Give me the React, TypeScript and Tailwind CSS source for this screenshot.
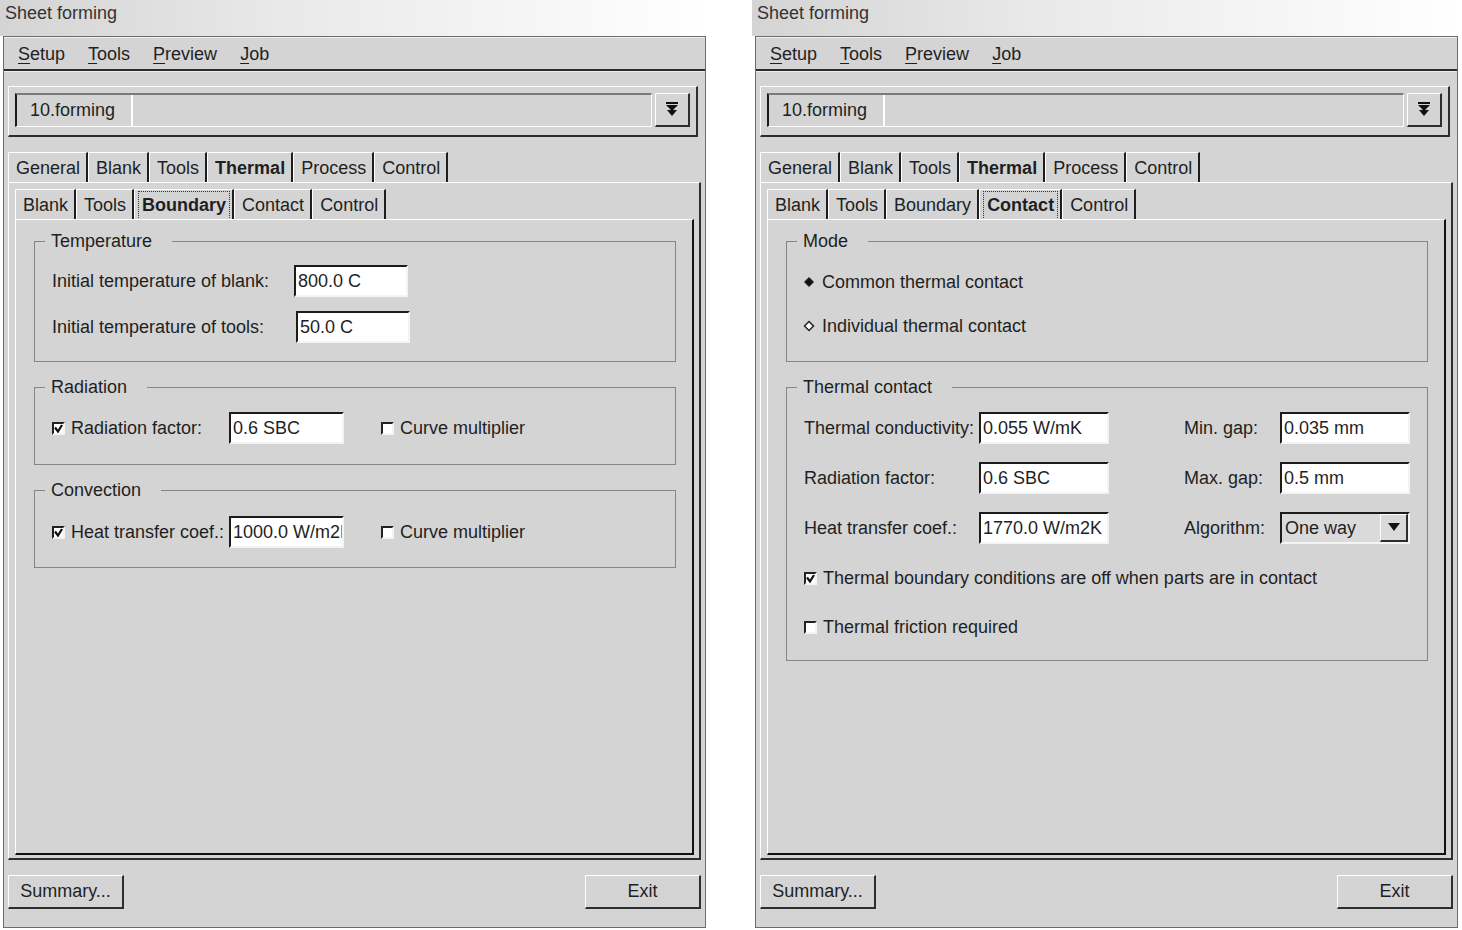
import React from 'react';

const MAIN_TABS = ['General', 'Blank', 'Tools', 'Thermal', 'Process', 'Control'];
const SUB_TABS = ['Blank', 'Tools', 'Boundary', 'Contact', 'Control'];

const raised =
  'border-t border-l border-t-white border-l-white border-b-2 border-r-2 border-b-[#2e2e2e] border-r-[#2e2e2e]';
const sunken =
  'border-2 border-t-[#1c1c1c] border-l-[#1c1c1c] border-b-[#f4f4f4] border-r-[#f4f4f4]';

function MenuBar() {
  const items = ['Setup', 'Tools', 'Preview', 'Job'];
  return (
    <div className="h-[34px] flex items-center gap-[23px] pl-[14px] pt-[2px] border-t border-t-[#f2f2f2] border-b-2 border-b-[#2b2b2b] shadow-[0_1px_0_#ededed]">
      {items.map(m => (
        <span key={m}>
          <span className="underline underline-offset-[3px]">{m[0]}</span>
          {m.slice(1)}
        </span>
      ))}
    </div>
  );
}

function ComboBar() {
  return (
    <div className={`mt-[15px] w-[690px] h-[51px] flex items-start pt-[6px] pl-[6px] pr-[6px] ${raised}`}>
      <div className="flex-1 h-[34px] flex border-t-2 border-l-2 border-t-[#7a7a7a] border-l-[#1a1a1a] border-b border-r border-b-white border-r-white">
        <div className="w-[116px] flex items-center pl-[13px] border-r-2 border-r-white">10.forming</div>
        <div className="flex-1" />
      </div>
      <div className={`ml-[3px] w-[35px] h-[34px] flex items-center justify-center ${raised}`}>
        <svg width="14" height="15" viewBox="0 0 14 15">
          <rect x="1" y="0" width="12" height="2" fill="#111" />
          <polygon points="1,3 13,3 7,9" fill="#111" />
          <polygon points="2,8 12,8 7,14" fill="#111" />
        </svg>
      </div>
    </div>
  );
}

function Tabs({ items, active, focus }: { items: string[]; active: string; focus?: boolean }) {
  return (
    <div className="flex h-[30px]">
      {items.map(t => {
        const on = t === active;
        return (
          <div
            key={t}
            className={`flex items-center pt-[2px] pl-[7px] pr-[6px] border-t border-l border-t-white border-l-white border-r-2 border-r-[#1e1e1e] ${on ? 'font-bold' : ''}`}
          >
            {on && focus ? (
              <span className="outline-1 outline-dotted outline-[#333] outline-offset-[3px]">{t}</span>
            ) : (
              t
            )}
          </div>
        );
      })}
    </div>
  );
}

function Field({ value, w }: { value: string; w: string }) {
  return (
    <div className={`${w} h-[32px] bg-white pl-[2px] flex items-center overflow-hidden whitespace-nowrap ${sunken}`}>
      {value}
    </div>
  );
}

function Check({ on }: { on?: boolean }) {
  return (
    <div className="w-[13px] h-[13px] shrink-0 bg-white border-2 border-t-[#222] border-l-[#222] border-b-[#f4f4f4] border-r-[#f4f4f4] flex items-center justify-center">
      {on && (
        <svg width="9" height="9" viewBox="0 0 9 9">
          <path d="M1 3.5 L4 7.5 L8 1" stroke="#111" strokeWidth="2.2" fill="none" />
        </svg>
      )}
    </div>
  );
}

function Radio({ on }: { on?: boolean }) {
  return (
    <svg width="12" height="12" viewBox="0 0 12 12" className="shrink-0">
      <polygon
        points="6,1.5 10.5,6 6,10.5 1.5,6"
        fill={on ? '#111' : '#fff'}
        stroke="#222"
        strokeWidth={on ? 1 : 1.5}
      />
    </svg>
  );
}

function Group({
  title,
  className,
  children,
}: {
  title: string;
  className: string;
  children: React.ReactNode;
}) {
  return (
    <fieldset className={`border border-[#858585] px-[10px] ${className}`}>
      <legend className="pl-[6px] pr-[20px] leading-[21px]">{title}</legend>
      {children}
    </fieldset>
  );
}

function Button({ children }: { children: React.ReactNode }) {
  return (
    <div className={`w-[116px] h-[34px] flex items-center justify-center ${raised}`}>{children}</div>
  );
}

function Window({ sub, className, children }: { sub: string; className: string; children: React.ReactNode }) {
  return (
    <div className={`${className} flex flex-col`}>
      <div className="h-[36px] pl-[5px] pt-[3px] text-[#333] bg-linear-to-r from-[#d4d4d4] via-[#e9e9e9] via-40% to-white">
        Sheet forming
      </div>
      <div className="ml-[3px] w-[703px] border border-[#6b6b6b] bg-[#d4d4d4] flex flex-col">
        <MenuBar />
        <div className="px-[4px] flex flex-col">
          <ComboBar />
          <div className="mt-[15px]">
            <Tabs items={MAIN_TABS} active="Thermal" />
          </div>
          <div className={`h-[678px] flex flex-col pt-[6px] pl-[6px] pr-[5px] pb-[3px] ${raised}`}>
            <Tabs items={SUB_TABS} active={sub} focus />
            <div className="flex-1 flex flex-col pl-[18px] pr-[16px] border-t border-l border-t-white border-l-white border-b-2 border-r-2 border-b-[#111] border-r-[#111]">
              {children}
            </div>
          </div>
          <div className="mt-[15px] mb-[18px] flex justify-between">
            <Button>Summary...</Button>
            <Button>Exit</Button>
          </div>
        </div>
      </div>
    </div>
  );
}

function BoundaryPage() {
  return (
    <>
      <Group title="Temperature" className="mt-[11px] pt-[13px] pb-[18px]">
        <div className="h-[32px] flex items-center pl-[7px]">
          <span className="w-[242px]">Initial temperature of blank:</span>
          <Field value="800.0 C" w="w-[114px]" />
        </div>
        <div className="mt-[14px] h-[32px] flex items-center pl-[7px]">
          <span className="w-[244px]">Initial temperature of tools:</span>
          <Field value="50.0 C" w="w-[114px]" />
        </div>
      </Group>
      <Group title="Radiation" className="mt-[15px] pt-[14px] pb-[20px]">
        <div className="h-[32px] flex items-center pl-[7px]">
          <Check on />
          <span className="ml-[6px] w-[158px]">Radiation factor:</span>
          <Field value="0.6 SBC" w="w-[115px]" />
          <div className="ml-[37px]">
            <Check />
          </div>
          <span className="ml-[6px]">Curve multiplier</span>
        </div>
      </Group>
      <Group title="Convection" className="mt-[15px] pt-[15px] pb-[19px]">
        <div className="h-[32px] flex items-center pl-[7px]">
          <Check on />
          <span className="ml-[6px] w-[158px]">Heat transfer coef.:</span>
          <Field value="1000.0 W/m2K" w="w-[115px]" />
          <div className="ml-[37px]">
            <Check />
          </div>
          <span className="ml-[6px]">Curve multiplier</span>
        </div>
      </Group>
    </>
  );
}

function ContactPage() {
  const rows: [string, React.ReactNode, string, React.ReactNode][] = [
    ['Thermal conductivity:', <Field value="0.055 W/mK" w="w-[130px]" />, 'Min. gap:', <Field value="0.035 mm" w="w-[130px]" />],
    ['Radiation factor:', <Field value="0.6 SBC" w="w-[130px]" />, 'Max. gap:', <Field value="0.5 mm" w="w-[130px]" />],
    [
      'Heat transfer coef.:',
      <Field value="1770.0 W/m2K" w="w-[130px]" />,
      'Algorithm:',
      <div className={`w-[130px] h-[32px] flex bg-[#dadada] ${sunken}`}>
        <span className="flex-1 flex items-center pl-[3px]">One way</span>
        <div className={`w-[28px] flex items-center justify-center ${raised}`}>
          <svg width="12" height="9" viewBox="0 0 12 9">
            <polygon points="0,0 12,0 6,8" fill="#111" />
          </svg>
        </div>
      </div>,
    ],
  ];
  return (
    <>
      <Group title="Mode" className="mt-[11px] pt-[14px] pb-[19px]">
        <div className="h-[32px] flex items-center pl-[6px] gap-[7px]">
          <Radio on />
          <span>Common thermal contact</span>
        </div>
        <div className="mt-[12px] h-[32px] flex items-center pl-[6px] gap-[7px]">
          <Radio />
          <span>Individual thermal contact</span>
        </div>
      </Group>
      <Group title="Thermal contact" className="mt-[15px] pt-[14px] pb-[17px]">
        <div className="flex flex-col gap-[18px]">
          {rows.map(([a, fa, b, fb]) => (
            <div key={a} className="h-[32px] flex items-center pl-[7px]">
              <span className="w-[175px] whitespace-nowrap">{a}</span>
              {fa}
              <span className="ml-[75px] w-[96px]">{b}</span>
              {fb}
            </div>
          ))}
          <div className="h-[32px] flex items-center pl-[7px]">
            <Check on />
            <span className="ml-[6px]">Thermal boundary conditions are off when parts are in contact</span>
          </div>
        </div>
        <div className="mt-[17px] h-[32px] flex items-center pl-[7px]">
          <Check />
          <span className="ml-[6px]">Thermal friction required</span>
        </div>
      </Group>
    </>
  );
}

export default function App() {
  return (
    <div className="w-[1462px] h-[930px] overflow-hidden bg-white flex font-['Liberation_Sans',Arial,sans-serif] text-[18px] leading-[21px] text-[#1f1f1f]">
      <Window sub="Boundary" className="w-[708px]">
        <BoundaryPage />
      </Window>
      <div className="w-[44px]" />
      <Window sub="Contact" className="w-[710px]">
        <ContactPage />
      </Window>
    </div>
  );
}
